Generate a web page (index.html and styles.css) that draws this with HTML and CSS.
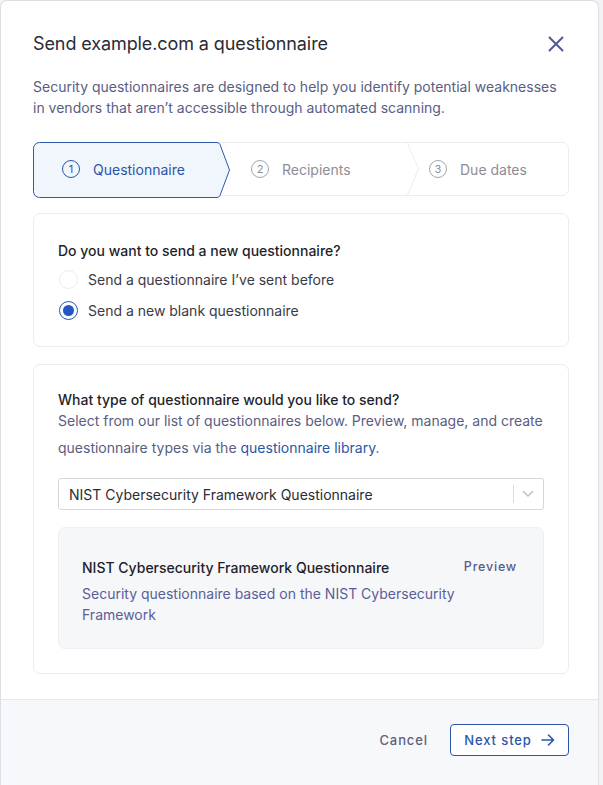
FILE: index.html
```html
<!DOCTYPE html>
<html lang="en">
<head>
<meta charset="utf-8">
<title>Send questionnaire</title>
<link rel="stylesheet" href="styles.css">
</head>
<body>
<div class="modal">
  <div class="modal-body">
    <div class="header">
      <h1 class="title">Send example.com a questionnaire</h1>
      <button class="close" aria-label="Close">
        <svg width="16" height="16" viewBox="0 0 16 16"><path d="M1.5 1.5 L14.5 14.5 M14.5 1.5 L1.5 14.5" stroke="#535a98" stroke-width="2" stroke-linecap="round" fill="none"/></svg>
      </button>
    </div>
    <p class="intro">Security questionnaires are designed to help you identify potential weaknesses in vendors that aren’t accessible through automated scanning.</p>

    <div class="stepper">
      <div class="step step-1 active">
        <svg class="step-bg" width="198" height="56" viewBox="0 0 198 56"><path d="M6.5 0.5 H184 Q186 0.5 187 2.5 L196.5 28 L187 53.5 Q186 55.5 184 55.5 H6.5 A6 6 0 0 1 0.5 49.5 V6.5 A6 6 0 0 1 6.5 0.5 Z" fill="#f1f5fc" stroke="#2d58a8" stroke-width="1"/></svg>
        <span class="num">1</span><span class="label">Questionnaire</span>
      </div>
      <div class="step step-2">
        <svg class="sep" width="14" height="54" viewBox="0 0 14 54"><path d="M1 0 L12.5 27 L1 54" stroke="#ececf0" stroke-width="1" fill="none"/></svg>
        <span class="num">2</span><span class="label">Recipients</span>
      </div>
      <div class="step step-3">
        <span class="num">3</span><span class="label">Due dates</span>
      </div>
    </div>

    <section class="card card-radio">
      <h2 class="card-title">Do you want to send a new questionnaire?</h2>
      <label class="radio-row"><span class="radio"></span><span>Send a questionnaire I’ve sent before</span></label>
      <label class="radio-row"><span class="radio checked"></span><span>Send a new blank questionnaire</span></label>
    </section>

    <section class="card card-type">
      <h2 class="card-title">What type of questionnaire would you like to send?</h2>
      <p class="card-desc">Select from our list of questionnaires below. Preview, manage, and create questionnaire types via the <a class="link" href="#">questionnaire library</a>.</p>
      <div class="select">
        <span class="select-value">NIST Cybersecurity Framework Questionnaire</span>
        <span class="select-sep"></span>
        <svg class="select-chev" width="12" height="8" viewBox="0 0 12 8"><path d="M1.5 1.5 L6 6 L10.5 1.5" stroke="#c4c4cb" stroke-width="1.6" fill="none" stroke-linecap="round" stroke-linejoin="round"/></svg>
      </div>
      <div class="preview-box">
        <div class="preview-text">
          <div class="preview-title">NIST Cybersecurity Framework Questionnaire</div>
          <div class="preview-desc">Security questionnaire based on the NIST Cybersecurity Framework</div>
        </div>
        <a class="preview-link" href="#">Preview</a>
      </div>
    </section>
  </div>
  <div class="footer">
    <button class="btn-cancel">Cancel</button>
    <button class="btn-next">Next step
      <svg width="14" height="12" viewBox="0 0 14 12"><path d="M1 6 H12.5 M7.5 1 L12.5 6 L7.5 11" stroke="#2b56a8" stroke-width="1.6" fill="none" stroke-linecap="round" stroke-linejoin="round"/></svg>
    </button>
  </div>
</div>
</body>
</html>
```

FILE: styles.css
```css
* { box-sizing: border-box; }
html, body { margin: 0; padding: 0; }
body {
  background: #f3f3f5;
  font-family: Inter, "Noto Sans", "Liberation Sans", sans-serif;
  color: #2b2b36;
  height: 785px;
  overflow: hidden;
}
.modal {
  width: 599px;
  height: 785px;
  background: #fff;
  border: 1px solid #dedee4;
  border-bottom: 0;
  border-radius: 7px 7px 0 0;
  overflow: hidden;
  display: flex;
  flex-direction: column;
}
.modal-body {
  padding: 32px 29px 25px 32px;
}
.header {
  display: flex;
  align-items: center;
  justify-content: space-between;
}
.title {
  margin: 0;
  font-size: 18px;
  font-weight: 400;
  line-height: 22px;
  color: #2b2b36;
  letter-spacing: -0.1px;
}
.close {
  border: 0;
  background: none;
  padding: 0;
  margin-right: 5px;
  width: 16px;
  height: 16px;
  display: flex;
}
.intro {
  margin: 21px 0 0;
  font-size: 14px;
  line-height: 21px;
  color: #5a5d83;
}
.stepper {
  margin-top: 24px;
  height: 54px;
  border: 1px solid #ececf0;
  border-radius: 7px;
  display: flex;
}
.step {
  position: relative;
  display: flex;
  align-items: center;
  gap: 13px;
  font-size: 14px;
  color: #8d8d97;
}
.step-1 { width: 195px; padding-left: 28px; }
.step-2 { width: 177px; padding-left: 22px; }
.step-3 { flex: 1; padding-left: 23px; }
.step-bg {
  position: absolute;
  left: -1px;
  top: -1px;
}
.sep {
  position: absolute;
  right: -14px;
  top: -1px;
}
.step .num, .step .label { position: relative; }
.num {
  width: 18px;
  height: 18px;
  border: 1px solid #a5a5ae;
  border-radius: 50%;
  display: flex;
  align-items: center;
  justify-content: center;
  font-size: 11px;
  color: #8d8d97;
}
.step.active { color: #2b56a8; }
.step.active .num { border-color: #2b56a8; color: #2b56a8; }
.card {
  border: 1px solid #ececf0;
  border-radius: 7px;
  padding: 27px 24px;
}
.card-radio { margin-top: 17px; padding-bottom: 20px; }
.card-type { margin-top: 17px; padding-top: 25px; padding-bottom: 24px; }
.card-title {
  margin: 0;
  font-size: 14px;
  font-weight: 500;
  line-height: 20px;
  color: #1f1f2c;
}
.radio-row {
  display: flex;
  align-items: center;
  gap: 10px;
  font-size: 14px;
  line-height: 20px;
  color: #3a3a46;
  height: 31px;
}
.radio-row:first-of-type { margin-top: 3px; }
.radio {
  width: 19px;
  height: 19px;
  margin-left: 1px;
  border: 1px solid #ececf0;
  border-radius: 50%;
  display: flex;
  align-items: center;
  justify-content: center;
  background: #fff;
}
.radio.checked { border-color: #2b56a8; }
.radio.checked::after {
  content: "";
  width: 11px;
  height: 11px;
  border-radius: 50%;
  background: #2257c4;
}
.card-desc {
  margin: -3px 0 0;
  font-size: 14px;
  line-height: 27px;
  color: #5a5d83;
}
.link { color: #2b56a8; text-decoration: none; }
.select {
  margin-top: 17px;
  height: 32px;
  border: 1px solid #d6d6dc;
  border-radius: 3px;
  display: flex;
  align-items: center;
  padding: 0 9px 0 10px;
}
.select-value {
  flex: 1;
  font-size: 14px;
  color: #2b2b36;
}
.select-sep {
  width: 1px;
  height: 18px;
  background: #dcdce2;
  margin-right: 8px;
}
.preview-box {
  margin-top: 17px;
  background: #f6f7f9;
  border: 1px solid #efeff3;
  border-radius: 7px;
  padding: 30px 26px 23px 23px;
  display: flex;
  gap: 4px;
}
.preview-text { flex: 1; }
.preview-title {
  font-size: 14px;
  font-weight: 500;
  line-height: 20px;
  color: #1f1f2c;
}
.preview-desc {
  margin-top: 5px;
  font-size: 14px;
  line-height: 21px;
  color: #5a5e98;
}
.preview-link {
  font-size: 12.5px;
  font-weight: 500;
  letter-spacing: 0.8px;
  color: #565c8e;
  text-decoration: none;
  line-height: 18px;
}
.footer {
  flex: 1;
  border-top: 1px solid #e6e6ec;
  background: #f7f8fb;
  display: flex;
  align-items: flex-start;
  justify-content: flex-end;
  gap: 22px;
  padding: 24px 29px 0 0;
}
.btn-cancel {
  border: 0;
  background: none;
  font-family: inherit;
  font-size: 13px;
  font-weight: 500;
  letter-spacing: 0.9px;
  color: #5c6080;
  height: 32px;
  padding: 0;
}
.btn-next {
  height: 32px;
  width: 119px;
  border: 1px solid #2b56a8;
  border-radius: 4px;
  background: #fff;
  font-family: inherit;
  font-size: 13px;
  font-weight: 500;
  letter-spacing: 0.9px;
  color: #2b56a8;
  display: flex;
  align-items: center;
  justify-content: center;
  gap: 9px;
  padding: 0;
}
```
